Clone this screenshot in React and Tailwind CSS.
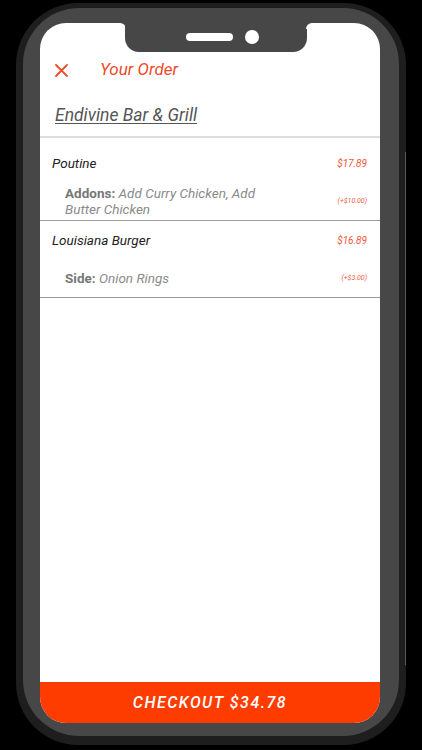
import React from 'react';

const items = [
    {
        name: 'Poutine',
        price: '$17.89',
        label: 'Addons:',
        detail: 'Add Curry Chicken, Add Butter Chicken',
        extra: '(+$10.00)',
    },
    {
        name: 'Louisiana Burger',
        price: '$16.89',
        label: 'Side:',
        detail: 'Onion Rings',
        extra: '(+$3.00)',
    },
];

function CloseIcon() {
    return (
        <svg width="13" height="13" viewBox="0 0 13 13" fill="none">
            <path d="M1 1L12 12M12 1L1 12" stroke="#ef4a2a" strokeWidth="1.8" strokeLinecap="round" />
        </svg>
    );
}

function Notch() {
    return (
        <div className="absolute left-[80px] top-0 flex">
            {/* flared left corner */}
            <div className="w-[6px] h-[6px] bg-[#474747] -mr-px">
                <div className="w-full h-full bg-white rounded-tr-[6px]" />
            </div>
            <div className="w-[182px] h-[29px] bg-[#474747] rounded-b-[14px] flex items-center pl-[61px] gap-[12px] pb-[1px]">
                <div className="w-[47px] h-[8px] rounded-full bg-white" />
                <div className="w-[14px] h-[14px] rounded-full bg-white" />
            </div>
            <div className="w-[6px] h-[6px] bg-[#474747] -ml-px">
                <div className="w-full h-full bg-white rounded-tl-[6px]" />
            </div>
        </div>
    );
}

function OrderItem({ item, first }) {
    return (
        <div className={`border-b border-[#9a9a9a] pr-[13px] ${first ? 'pt-[15px] pb-[3px]' : 'pt-[9px] pb-[11px]'}`}>
            <div className="h-5 flex items-center justify-between pl-[12px]">
                <span className="text-[13.5px] italic text-[#222]">{item.name}</span>
                <span className="text-[10px] italic text-[#f0583a]">{item.price}</span>
            </div>
            <div className={`flex items-center justify-between pl-[25px] ${first ? 'mt-[12px]' : 'mt-[20px]'}`}>
                <p className="w-[212px] text-[13.5px] leading-4 text-[#777]">
                    <span className="font-bold">{item.label} </span>
                    <span className="italic text-[#8a8a8a]">{item.detail}</span>
                </p>
                <span className="text-[7px] italic text-[#f0583a]">{item.extra}</span>
            </div>
        </div>
    );
}

export default function App() {
    return (
        <div
            className="w-[422px] h-[750px] bg-black pt-[3px] pl-[16px]"
            style={{ fontFamily: 'Roboto, "Noto Sans", sans-serif' }}
        >
            <div className="relative w-[390px] h-[742px] bg-[#1e1e1e] rounded-[62px] pt-[5px] px-[7px]">
                <div className="absolute right-0 top-[149px] h-[513px] w-px bg-[#5a5a5a]" />
                <div className="w-[376px] h-[728px] bg-[#474747] rounded-[56px] pt-[15px] pl-[17px]">
                    <div className="relative w-[340px] h-[700px] bg-white rounded-[26px] overflow-hidden flex flex-col">
                        <Notch />

                        <div className="pt-[35px] px-[15px] border-b-2 border-[#dedede] pb-[11px]">
                            <div className="h-6 flex items-center">
                                <CloseIcon />
                                <span className="ml-[32px] text-[17px] italic text-[#ef4a2a]">Your Order</span>
                            </div>
                            <div className="mt-[23px] h-5 flex items-center">
                                <span className="text-[17.5px] italic text-[#555] underline underline-offset-2">
                                    Endivine Bar &amp; Grill
                                </span>
                            </div>
                        </div>

                        <div className="flex-1">
                            {items.map((item, i) => (
                                <OrderItem key={item.name} item={item} first={i === 0} />
                            ))}
                        </div>

                        <button className="h-[41px] w-full bg-[#ff3c00] text-white text-[16px] italic font-medium tracking-[1.5px] flex items-center justify-center">
                            CHECKOUT $34.78
                        </button>
                    </div>
                </div>
            </div>
        </div>
    );
}
